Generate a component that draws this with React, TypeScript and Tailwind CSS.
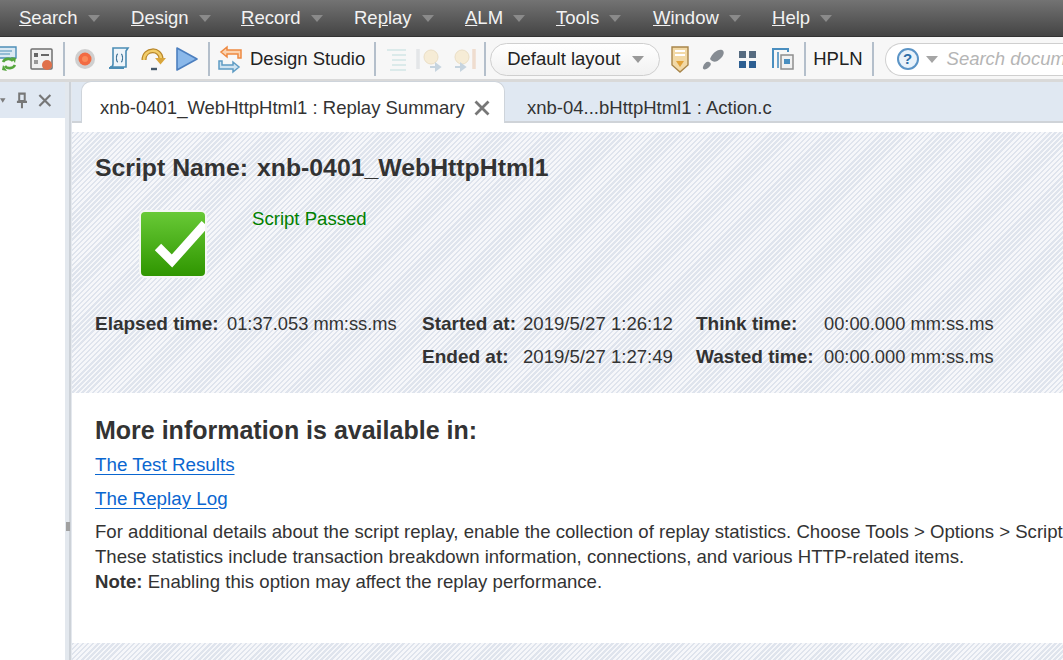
import React from 'react';

const menus = [
  { key: 'S', rest: 'earch', w: 'w-[112px]' },
  { key: 'D', rest: 'esign', w: 'w-[110px]' },
  { key: 'R', rest: 'ecord', w: 'w-[113px]' },
  { key: 'Re', rest: 'play', w: 'w-[111px]', under: 'p' },
  { key: 'A', rest: 'LM', w: 'w-[91px]' },
  { key: 'T', rest: 'ools', w: 'w-[97px]' },
  { key: 'W', rest: 'indow', w: 'w-[119px]' },
  { key: 'H', rest: 'elp', w: 'w-[80px]' },
];

function Sep({ className = '' }: { className?: string }) {
  return <div className={`h-[34px] w-[2px] shrink-0 bg-[#b4bfcb] ${className}`} />;
}

function Caret({ color = '#8f8f8f' }: { color?: string }) {
  return (
    <svg width="12" height="7" viewBox="0 0 12 7" className="shrink-0">
      <path d="M0 0h12L6 7z" fill={color} />
    </svg>
  );
}

function Icon({ w, h = 30, children, className = '' }: { w: number; h?: number; children: React.ReactNode; className?: string }) {
  return (
    <svg width={w} height={h} viewBox={`0 0 ${w} ${h}`} className={`shrink-0 ${className}`}>
      {children}
    </svg>
  );
}

function Toolbar() {
  return (
    <div className="flex h-[45px] shrink-0 items-center overflow-hidden border-b-[3px] border-[#d9d9d9] bg-[#f7f7f7] pt-[2px] text-[18.5px] whitespace-nowrap text-[#222]">
      {/* refresh doc, cut off at the window edge */}
      <Icon w={18}>
        <path d="M-4 3h20v11H-4z" fill="#dbe9f3" stroke="#4d8fb8" strokeWidth="1.4" />
        <path d="M0 7h12M0 10h10" stroke="#4d8fb8" strokeWidth="1.2" />
        <path d="M3 18c2-4 8-4 10-1M15 21c-2 4-8 4-10 1" fill="none" stroke="#55a63c" strokeWidth="2.600" />
        <path d="M11 13l5 1-1 5zM7 27l-5-1 1-5z" fill="#55a63c" />
      </Icon>
      <Icon w={24} className="ml-[12px]">
        <rect x="1" y="5" width="21" height="20" rx="1" fill="#f1f1f1" stroke="#707070" strokeWidth="1.5" />
        <rect x="4" y="9" width="4" height="4" fill="#666" />
        <path d="M11 11h8" stroke="#666" strokeWidth="2" />
        <rect x="4" y="16" width="4" height="4" fill="#999" />
        <circle cx="17" cy="21" r="5" fill="#e0704a" />
      </Icon>
      <Sep className="ml-[9px]" />
      <Icon w={22} className="ml-[9px]">
        <circle cx="11" cy="15" r="10" fill="#cfcfcf" />
        <circle cx="11" cy="15" r="6.5" fill="#f26b43" />
        <circle cx="11" cy="15" r="3" fill="#fa8a5a" />
      </Icon>
      <Icon w={24} className="ml-[11px]">
        <path d="M6 4h15l-2 3v16H3c2 0 3-1 3-3z" fill="#eef5fa" stroke="#4b8db5" strokeWidth="1.6" />
        <path d="M2 24h15" stroke="#4b8db5" strokeWidth="2" />
        <path d="M11 10c-2 0-1 4-2 4 1 0 0 4 2 4M14 10c2 0 1 4 2 4-1 0 0 4-2 4" fill="none" stroke="#3a6f94" strokeWidth="1.200" />
      </Icon>
      <Icon w={26} className="ml-[10px]">
        <path d="M3 16c0-12 17-12 17-1" fill="none" stroke="#b8862a" strokeWidth="5" />
        <path d="M3 16c0-12 17-12 17-1" fill="none" stroke="#f2cd6a" strokeWidth="2.500" />
        <path d="M14 14h11l-5.500 6.500z" fill="#d9a53a" />
        <path d="M10 25h6" stroke="#44586b" strokeWidth="2.400" />
      </Icon>
      <Icon w={24} className="ml-[8px]">
        <path d="M2 4l20 11L2 26z" fill="#8ab8ea" stroke="#4c7fbf" strokeWidth="1.6" strokeLinejoin="round" />
      </Icon>
      <Sep className="ml-[9px]" />
      <Icon w={24} className="ml-[8px]">
        <path d="M9 3L3 8l6 5v-3h11v4h3V6H9z" fill="#fbd3b0" stroke="#ee8a42" strokeWidth="1.5" />
        <path d="M15 28l6-5-6-5v3H4v-4H1v8h14z" fill="#cfe3f1" stroke="#5f9cc4" strokeWidth="1.5" />
      </Icon>
      <span className="ml-[8px] shrink-0">Design Studio</span>
      <Sep className="ml-[9px]" />
      <div className="flex shrink-0 items-center opacity-40">
        <Icon w={24} className="ml-[8px]">
          <path d="M3 6h19M8 11h14M8 16h14M8 21h14M6 26h16" stroke="#9ccfd0" strokeWidth="1.5" />
        </Icon>
        <Icon w={26} className="ml-[8px]">
          <path d="M2 5v20" stroke="#c9cfd4" strokeWidth="3.500" />
          <circle cx="15" cy="13" r="7" fill="#f5dca6" stroke="#d9bb7c" />
          <path d="M14 23h10M24 23l-4-3v6z" stroke="#7fa2bc" strokeWidth="2" />
        </Icon>
        <Icon w={26} className="ml-[9px]">
          <path d="M23 5v20" stroke="#e4b794" strokeWidth="3.500" />
          <circle cx="11" cy="13" r="7" fill="#f5dca6" stroke="#d9bb7c" />
          <path d="M4 23h10M14 23l-4-3v6z" stroke="#7fa2bc" strokeWidth="2" />
        </Icon>
      </div>
      <Sep className="ml-[7px]" />
      <div className="ml-[4px] flex h-[33px] w-[170px] shrink-0 items-center rounded-full border border-[#cfcfcf] bg-[linear-gradient(#ffffff,#f1f1f1)] pl-[16px]">
        Default layout
        <span className="ml-[12px]"><Caret color="#999" /></span>
      </div>
      <Icon w={22} className="ml-[9px]">
        <path d="M3 3h16v18l-8 7-8-7z" fill="#f2d9a6" stroke="#a8854a" strokeWidth="1.4" />
        <path d="M6 7h10M6 11h10" stroke="#fff" strokeWidth="2" />
        <path d="M7 17h8l-4 6z" fill="#e2a33a" />
      </Icon>
      <Icon w={24} className="ml-[10px]">
        <path d="M9 15c2-5 7-10 12-9 3 1 2 6-2 9-3 3-7 4-10 0z" fill="#868c93" />
        <path d="M2 23c1-4 4-6 6-5 3 1 2 4-1 6-2 2-6 2-5-1z" fill="#868c93" />
      </Icon>
      <Icon w={20} className="ml-[13px]">
        <rect x="1" y="7" width="7" height="7" fill="#566b80" />
        <rect x="11" y="7" width="7" height="7" fill="#566b80" />
        <rect x="1" y="17" width="7" height="7" fill="#2d5f92" />
        <rect x="11" y="17" width="7" height="7" fill="#2d5f92" />
      </Icon>
      <Icon w={24} className="ml-[13px]">
        <path d="M2 24V5h14M2 5h15v3" fill="none" stroke="#4a8fc0" strokeWidth="2" />
        <path d="M7 8v16" stroke="#4a8fc0" strokeWidth="1.6" />
        <rect x="10" y="11" width="12" height="14" fill="#f1f1f1" stroke="#8e8e8e" strokeWidth="1.5" />
        <rect x="13" y="15" width="6" height="5" fill="#4a8fc0" />
      </Icon>
      <Sep className="ml-[9px]" />
      <span className="ml-[7px] shrink-0">HPLN</span>
      <Sep className="ml-[9px]" />
      <div className="ml-[11px] flex h-[33px] w-[220px] shrink-0 items-center rounded-l-full border border-r-0 border-[#cfcfcf] bg-white pl-[11px]">
        <div className="flex h-[22px] w-[22px] shrink-0 items-center justify-center rounded-full border-2 border-[#5b94c6] bg-[#e9f2fa] text-[15px] font-bold text-[#2d6ea8]">?</div>
        <span className="ml-[7px]"><Caret color="#a5a5a5" /></span>
        <span className="ml-[9px] italic text-[#b5b5b5]">Search documentation</span>
      </div>
    </div>
  );
}

function SidePanel() {
  return (
    <div className="flex w-[65px] shrink-0 flex-col">
      <div className="flex h-[36px] items-center justify-end gap-[10px] bg-[#e0e8f2] pr-[13px]">
        <svg width="8" height="5" viewBox="0 0 8 5" className="mr-[-1px]"><path d="M0 0h6L3 5z" fill="#7d7d7d" /></svg>
        <svg width="13" height="17" viewBox="0 0 13 17"><path d="M3.500 1h6v8h-6zM1 10h11M6.500 10v7" fill="none" stroke="#777" strokeWidth="2.200" /></svg>
        <svg width="15" height="15" viewBox="0 0 15 15"><path d="M1.500 1.500l12 12M13.500 1.500l-12 12" stroke="#777" strokeWidth="2.400" /></svg>
      </div>
      <div className="flex-1 bg-white" />
    </div>
  );
}

function Stat({ label, value, w, valueSize = 'text-[18.6px]' }: { label: string; value: string; w: string; valueSize?: string }) {
  return (
    <div className="flex h-[33px] items-center whitespace-nowrap">
      <span className={`text-[19px] font-bold ${w}`}>{label}</span>
      <span className={valueSize}>{value}</span>
    </div>
  );
}

const stripes = 'bg-[repeating-linear-gradient(135deg,#dfe4ed_0px,#dfe4ed_1.8px,#f6f7fa_1.8px,#f6f7fa_3.6px)]';

function Summary() {
  return (
    <div className="flex min-h-0 flex-1 flex-col overflow-hidden text-[18.6px] leading-[24px] text-[#333]">
      <div className="h-[9px] shrink-0 bg-white" />
      <div className={`h-[261px] shrink-0 pl-[23px] pt-[21px] ${stripes}`}>
        <h1 className="flex text-[24.8px] leading-[30px] font-bold">
          <span>Script Name:</span>
          <span className="ml-[9px]">xnb-0401_WebHttpHtml1</span>
        </h1>
        <div className="mt-[14px] flex h-[110px]">
          <div className="ml-[44px] mt-[13px] h-[68px] w-[68px] overflow-hidden rounded-[6px] border-[2px] border-[#f4f6f4] bg-[linear-gradient(#68c936,#2f9600)]">
            <svg width="64" height="64" viewBox="0 0 64 64">
              <path d="M17 35l14 14 33-37" fill="none" stroke="#fff" strokeWidth="9" />
            </svg>
          </div>
          <span className="ml-[45px] mt-[10px] text-[#008000]">Script Passed</span>
        </div>
        <div className="flex">
          <div className="w-[327px]">
            <Stat label="Elapsed time:" value="01:37.053 mm:ss.ms" w="w-[132px]" valueSize="text-[18.3px]" />
          </div>
          <div className="w-[274px]">
            <Stat label="Started at:" value="2019/5/27 1:26:12" w="w-[101px]" />
            <Stat label="Ended at:" value="2019/5/27 1:27:49" w="w-[101px]" />
          </div>
          <div>
            <Stat label="Think time:" value="00:00.000 mm:ss.ms" w="w-[128px]" valueSize="text-[18.3px]" />
            <Stat label="Wasted time:" value="00:00.000 mm:ss.ms" w="w-[128px]" valueSize="text-[18.3px]" />
          </div>
        </div>
      </div>
      <div className="h-[250px] shrink-0 bg-white pl-[23px] pt-[22px] whitespace-nowrap">
        <h2 className="text-[25px] leading-[30px] font-bold">More information is available in:</h2>
        <p className="mt-[3px] h-[34px] text-[18.8px] leading-[33px]"><a className="text-[#0a66d0] underline underline-offset-[3px]">The Test Results</a></p>
        <p className="h-[33px] text-[18.8px] leading-[33px]"><a className="text-[#0a66d0] underline underline-offset-[3px]">The Replay Log</a></p>
        <p className="mt-[4px] leading-[25px]">
          For additional details about the script replay, enable the collection of replay statistics. Choose Tools &gt; Options &gt; Scripts
          <br />
          These statistics include transaction breakdown information, connections, and various HTTP-related items.
          <br />
          <b>Note:</b> Enabling this option may affect the replay performance.
        </p>
      </div>
      <div className={`flex-1 ${stripes}`} />
    </div>
  );
}

export default function App() {
  return (
    <div className="flex h-[660px] w-[1063px] flex-col overflow-hidden bg-white font-['Liberation_Sans',sans-serif]">
      <div className="flex h-[37px] shrink-0 items-center border-b border-[#333] bg-[linear-gradient(#737373,#444444)] pl-[19px] text-[18.5px] text-[#f2f2f2]">
        {menus.map((m) => (
          <div key={m.rest} className={`flex shrink-0 items-center ${m.w}`}>
            {m.under ? (
              <span>Re<span className="underline">p</span>lay</span>
            ) : (
              <span><span className="underline">{m.key}</span>{m.rest}</span>
            )}
            <span className="ml-[10px]"><Caret color="#8a8a8a" /></span>
          </div>
        ))}
      </div>
      <Toolbar />
      <div className="flex min-h-0 flex-1">
        <SidePanel />
        <div className="relative w-[6px] shrink-0 border-r-[2px] border-[#cdd2d8] bg-[#e3e8ee]">
          <div className="absolute left-[1px] top-[440px] h-[9px] w-[4px] bg-[#a0a0a0]" />
        </div>
        <div className="flex min-w-0 flex-1 flex-col border-l border-[#e4e8ee]">
          <div className="flex h-[41px] shrink-0 items-end border-b-[2px] border-[#cfd3d8] bg-[#e0e8f2] pl-[9px] text-[18.5px] text-[#333]">
            <div className="mb-[-2px] flex h-[42px] w-[424px] shrink-0 items-center rounded-t-[10px] border border-b-0 border-[#ced4db] bg-white pl-[18px] pt-[10px] whitespace-nowrap">
              xnb-0401_WebHttpHtml1 : Replay Summary
              <svg width="16" height="16" viewBox="0 0 16 16" className="ml-[9px]"><path d="M1.500 1.500l13 13M14.500 1.500l-13 13" stroke="#777" strokeWidth="2.800" /></svg>
            </div>
            <div className="flex h-[41px] items-center pl-[22px] pt-[15px] whitespace-nowrap">xnb-04...bHttpHtml1 : Action.c</div>
          </div>
          <Summary />
        </div>
      </div>
    </div>
  );
}
